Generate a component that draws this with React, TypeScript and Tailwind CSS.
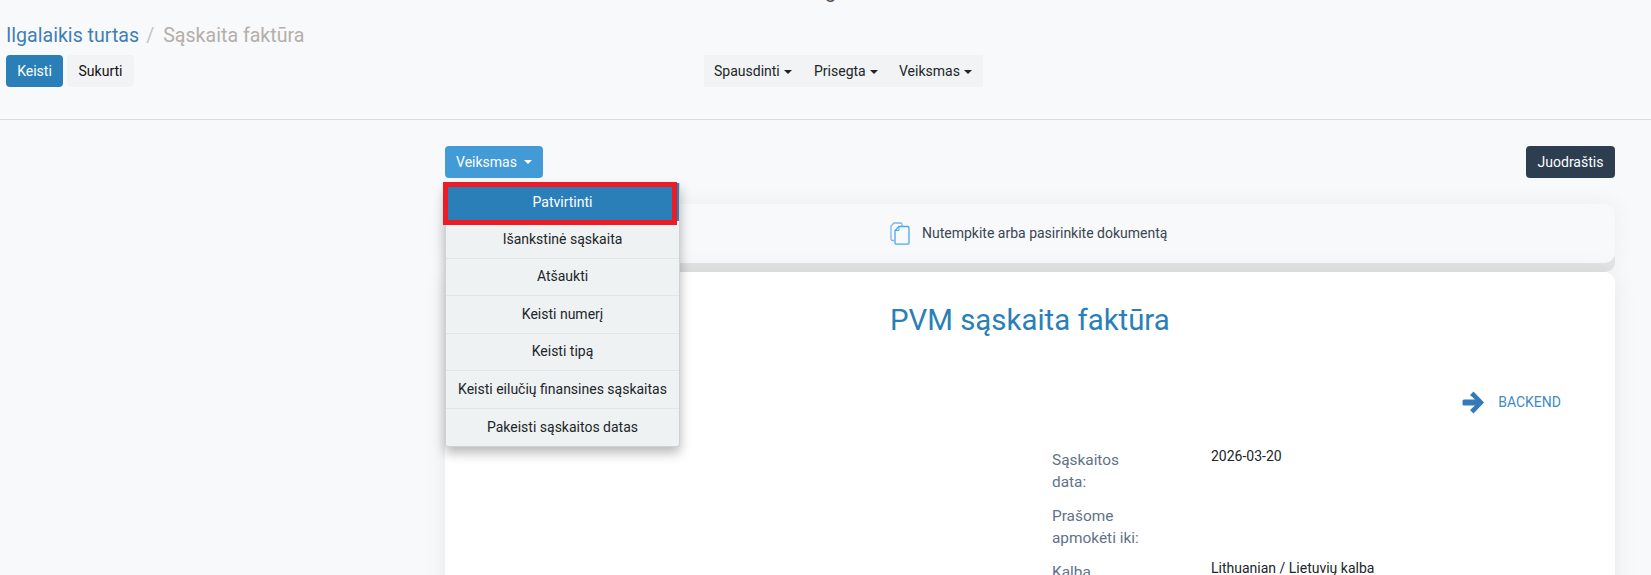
const menuItems = [
  "Išankstinė sąskaita",
  "Atšaukti",
  "Keisti numerį",
  "Keisti tipą",
  "Keisti eilučių finansines sąskaitas",
  "Pakeisti sąskaitos datas",
];

function Caret({ className }: { className: string }) {
  return (
    <span
      className={`ml-[4px] inline-block h-0 w-0 border-x-[4px] border-t-[4px] border-x-transparent align-middle ${className}`}
    />
  );
}

function DocsIcon() {
  return (
    <svg width="20" height="23" viewBox="0 0 20 23" fill="none" className="shrink-0">
      <path
        d="M4 18.5H2.5A1.5 1.5 0 0 1 1 17V4l3-3h6.5A1.5 1.5 0 0 1 12 2.5V4"
        stroke="#7fb4ea"
        strokeWidth="1.3"
      />
      <path
        d="M9 4.5h8.5A1.5 1.5 0 0 1 19 6v15a1.2 1.2 0 0 1-1.2 1.2H6.5A1.5 1.5 0 0 1 5 20.7V8.5z"
        fill="#f8f9fb"
        stroke="#4aa8ec"
        strokeWidth="1.3"
      />
      <path d="M9 4.5v4H5" stroke="#4aa8ec" strokeWidth="1" />
    </svg>
  );
}

function ArrowIcon() {
  return (
    <svg width="22" height="23" viewBox="0 0 22 23" className="shrink-0">
      <path
        d="M11.5 0.5 22 11.5 11.5 22.5 8 19 13 14.5H2A1.5 1.5 0 0 1 0.5 13V10A1.5 1.5 0 0 1 2 8.5H13L8 4Z"
        fill="#337ab7"
      />
    </svg>
  );
}

function Field({ label, value }: { label: React.ReactNode; value?: string }) {
  return (
    <div className="grid grid-cols-[159px_1fr]">
      <div className="text-[15.4px] leading-[22px] text-[#5f7288]">{label}</div>
      <div className="-mt-[4px] text-[14px] leading-[22px] text-[#212529]">{value}</div>
    </div>
  );
}

export default function App() {
  return (
    <div className="h-[575px] w-[1651px] overflow-hidden bg-[#f8f9fb] font-['Roboto',sans-serif]">
      {/* Header */}
      <header className="h-[120px] border-b border-[#dcdcdc]">
        <div className="flex h-[4px] items-end justify-center overflow-hidden pl-[10px]">
          <span className="text-[20px] leading-[26px] text-[#555]">g</span>
        </div>
        <div className="mt-[21px] flex h-[22px] items-center px-[6px] text-[19.6px] leading-[22px]">
          <span className="text-[#3f7fb5]">Ilgalaikis turtas</span>
          <span className="ml-[7px] mr-[9px] text-[#c4c4c4]">/</span>
          <span className="text-[#b5aeaa]">Sąskaita faktūra</span>
        </div>
        <div className="relative mt-[8px] flex h-[32px] items-center px-[6px] text-[14px]">
          <div className="flex gap-[4px]">
            <button className="flex h-[32px] w-[57px] items-center justify-center rounded-[4px] bg-[#2a7fb8] text-white">
              Keisti
            </button>
            <button className="flex h-[32px] w-[67px] items-center justify-center rounded-[4px] bg-[#f1f3f4] text-[#111]">
              Sukurti
            </button>
          </div>
          <div className="absolute left-[704px] top-0 flex h-[32px] w-[279px] items-center bg-[#f1f3f4] pl-[10px] text-[#212529]">
            <span className="w-[100px]">
              Spausdinti<Caret className="border-t-[#222]" />
            </span>
            <span className="w-[85px]">
              Prisegta<Caret className="border-t-[#222]" />
            </span>
            <span>
              Veiksmas<Caret className="border-t-[#222]" />
            </span>
          </div>
        </div>
      </header>

      {/* Main */}
      <main className="pl-[445px] pr-[36px] pt-[26px]">
        <div className="flex items-start justify-between">
          <div className="relative">
            <button className="flex h-[32px] w-[98px] items-center justify-center rounded-[4px] bg-[#429ad6] text-[14px] text-white">
              Veiksmas
              <Caret className="ml-[7px] border-t-white" />
            </button>
            {/* Dropdown */}
            <div className="absolute left-0 top-[37px] z-20 w-[235px] rounded-b-[3px] border-x border-b border-[#cfd2d3] bg-[#eff2f3] shadow-[0_6px_12px_rgba(0,0,0,0.28)]">
              <div className="flex h-[38px] items-center justify-center bg-[#2a7fb8] text-[14px] text-white">
                Patvirtinti
              </div>
              <div className="absolute -left-[3px] -top-[1px] h-[43px] w-[234px] border-[5px] border-[#ed1c24]" />
              {menuItems.map((item) => (
                <div
                  key={item}
                  className="flex h-[37.5px] items-center justify-center border-b border-[#e2e5e6] text-[14px] text-[#212529] last:border-b-0"
                >
                  {item}
                </div>
              ))}
            </div>
          </div>
          <button className="flex h-[32px] w-[89px] items-center justify-center rounded-[4px] bg-[#2c3e50] text-[14px] text-white">
            Juodraštis
          </button>
        </div>

        <div className="mt-[26px] flex h-[59px] items-center rounded-[10px] bg-[#f8f9fb] pl-[445px] shadow-[0_9px_0_#e2e3e3,0_0_24px_rgba(0,0,0,0.05)]">
          <DocsIcon />
          <span className="ml-[12px] text-[14px] text-[#3a4550]">Nutempkite arba pasirinkite dokumentą</span>
        </div>

        <div className="relative mt-[9px] h-[400px] rounded-[10px] bg-white pt-[30px] shadow-[0_0_24px_rgba(0,0,0,0.07)]">
          <h1 className="pl-[445px] text-[29.4px] leading-[36px] text-[#2a7fb8]">PVM sąskaita faktūra</h1>
          <div className="mt-[53px] flex items-center justify-end pr-[54px]">
            <ArrowIcon />
            <span className="ml-[14px] text-[14px] text-[#3f8ac4]">BACKEND</span>
          </div>
          <div className="mt-[35px] flex flex-col gap-[12px] pl-[607px]">
            <Field label={<>Sąskaitos<br />data:</>} value="2026-03-20" />
            <Field label={<>Prašome<br />apmokėti iki:</>} />
            <Field label="Kalba" value="Lithuanian / Lietuvių kalba" />
          </div>
        </div>
      </main>
    </div>
  );
}
